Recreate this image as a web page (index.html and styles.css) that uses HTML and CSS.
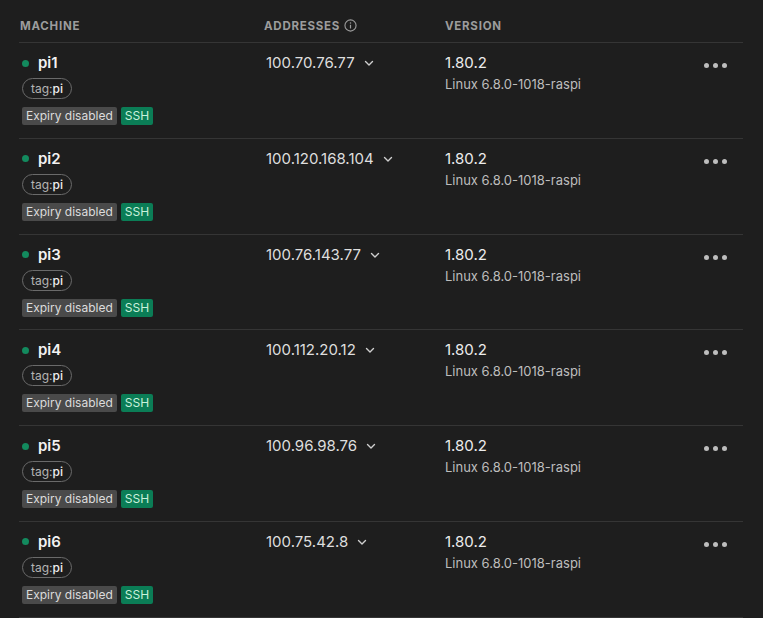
FILE: index.html
```html
<!DOCTYPE html>
<html lang="en">
<head>
    <meta charset="UTF-8">
    <meta name="viewport" content="width=device-width, initial-scale=1.0">
    <title>Machines</title>
    <link rel="stylesheet" href="styles.css">
</head>
<body>

<div class="machines">
    <div class="machines-head">
        <div class="col-machine">Machine</div>
        <div class="col-addr">Addresses
            <svg class="info-icon" width="13" height="13" viewBox="0 0 14 14"><circle cx="7" cy="7" r="6" fill="none" stroke="currentColor" stroke-width="1.2"/><line x1="7" y1="6.2" x2="7" y2="10.2" stroke="currentColor" stroke-width="1.3"/><circle cx="7" cy="4.2" r="0.8" fill="currentColor"/></svg>
        </div>
        <div class="col-version">Version</div>
        <div></div>
    </div>
    <div id="rows"></div>
</div>

<script>
    const machines = [
        { name: "pi1", ip: "100.70.76.77" },
        { name: "pi2", ip: "100.120.168.104" },
        { name: "pi3", ip: "100.76.143.77" },
        { name: "pi4", ip: "100.112.20.12" },
        { name: "pi5", ip: "100.96.98.76" },
        { name: "pi6", ip: "100.75.42.8" }
    ];

    const rows = document.getElementById('rows');
    machines.forEach(m => {
        rows.innerHTML += `
            <div class="machine-row">
                <div class="col-machine">
                    <div class="machine-name"><span class="status-dot"></span>${m.name}</div>
                    <span class="tag">tag:<b>pi</b></span>
                    <div class="badges">
                        <span class="badge badge-gray">Expiry disabled</span>
                        <span class="badge badge-green">SSH</span>
                    </div>
                </div>
                <div class="col-addr">
                    <span class="addr">${m.ip}
                        <svg width="12" height="12" viewBox="0 0 12 12"><path d="M2.5 4.5 L6 8 L9.5 4.5" fill="none" stroke="currentColor" stroke-width="1.4" stroke-linecap="round" stroke-linejoin="round"/></svg>
                    </span>
                </div>
                <div class="col-version">
                    <div class="version">1.80.2</div>
                    <div class="os">Linux 6.8.0-1018-raspi</div>
                </div>
                <div class="col-actions">
                    <span class="dots"><i></i><i></i><i></i></span>
                </div>
            </div>`;
    });
</script>

</body>
</html>
```

FILE: styles.css
```css
body {
    margin: 0;
    background-color: #1e1e1e;
    font-family: Inter, "Noto Sans", sans-serif;
    color: #e8e8e8;
}
.machines {
    margin: 0 20px 0 19px;
}
.machines-head,
.machine-row {
    display: grid;
    grid-template-columns: 245px 181px 1fr 36px;
    border-bottom: 1px solid #353535;
}
.machines-head {
    height: 43px;
    align-items: center;
    padding-top: 9px;
    box-sizing: border-box;
    font-size: 11.5px;
    font-weight: 700;
    letter-spacing: 0.75px;
    text-transform: uppercase;
    color: #9c9c9c;
}
.machines-head .col-machine {
    padding-left: 1px;
}
.machines-head .col-addr {
    display: flex;
    align-items: center;
    gap: 4px;
}
.info-icon {
    color: #9c9c9c;
}
.machine-row {
    height: 95.8px;
    box-sizing: border-box;
    padding-top: 9px;
}
.machine-row .col-machine {
    padding-left: 3px;
}
.machine-name {
    display: flex;
    align-items: center;
    font-size: 15px;
    font-weight: 600;
    line-height: 22px;
    color: #f2f2f2;
}
.status-dot {
    width: 7px;
    height: 7px;
    border-radius: 50%;
    background-color: #138a5e;
    margin-right: 9px;
}
.tag {
    display: inline-block;
    margin-top: 4px;
    height: 21px;
    box-sizing: border-box;
    padding: 0 8px;
    border: 1px solid #6a6a6a;
    border-radius: 11px;
    font-size: 12px;
    line-height: 19px;
    color: #b4b4b4;
}
.tag b {
    font-weight: 500;
    color: #f0f0f0;
}
.badges {
    display: flex;
    gap: 4px;
    margin-top: 8px;
}
.badge {
    height: 18px;
    padding: 0 4px;
    border-radius: 2px;
    font-size: 12px;
    line-height: 18px;
}
.badge-gray {
    background-color: #4a4a4a;
    color: #dcdcdc;
}
.badge-green {
    background-color: #0b7d56;
    color: #c9f1dc;
}
.machine-row .col-addr {
    padding-left: 2px;
}
.addr {
    display: inline-flex;
    align-items: center;
    gap: 8px;
    font-size: 15px;
    line-height: 22px;
    color: #dedede;
}
.addr svg {
    color: #cfcfcf;
}
.version {
    font-size: 15px;
    line-height: 22px;
    color: #ececec;
}
.os {
    font-size: 13px;
    line-height: 21px;
    color: #bdbdbd;
}
.col-actions {
    padding-top: 11px;
}
.dots {
    display: flex;
    gap: 4px;
    margin-left: -3px;
}
.dots i {
    width: 5px;
    height: 5px;
    border-radius: 50%;
    background-color: #bdbdbd;
}
```
